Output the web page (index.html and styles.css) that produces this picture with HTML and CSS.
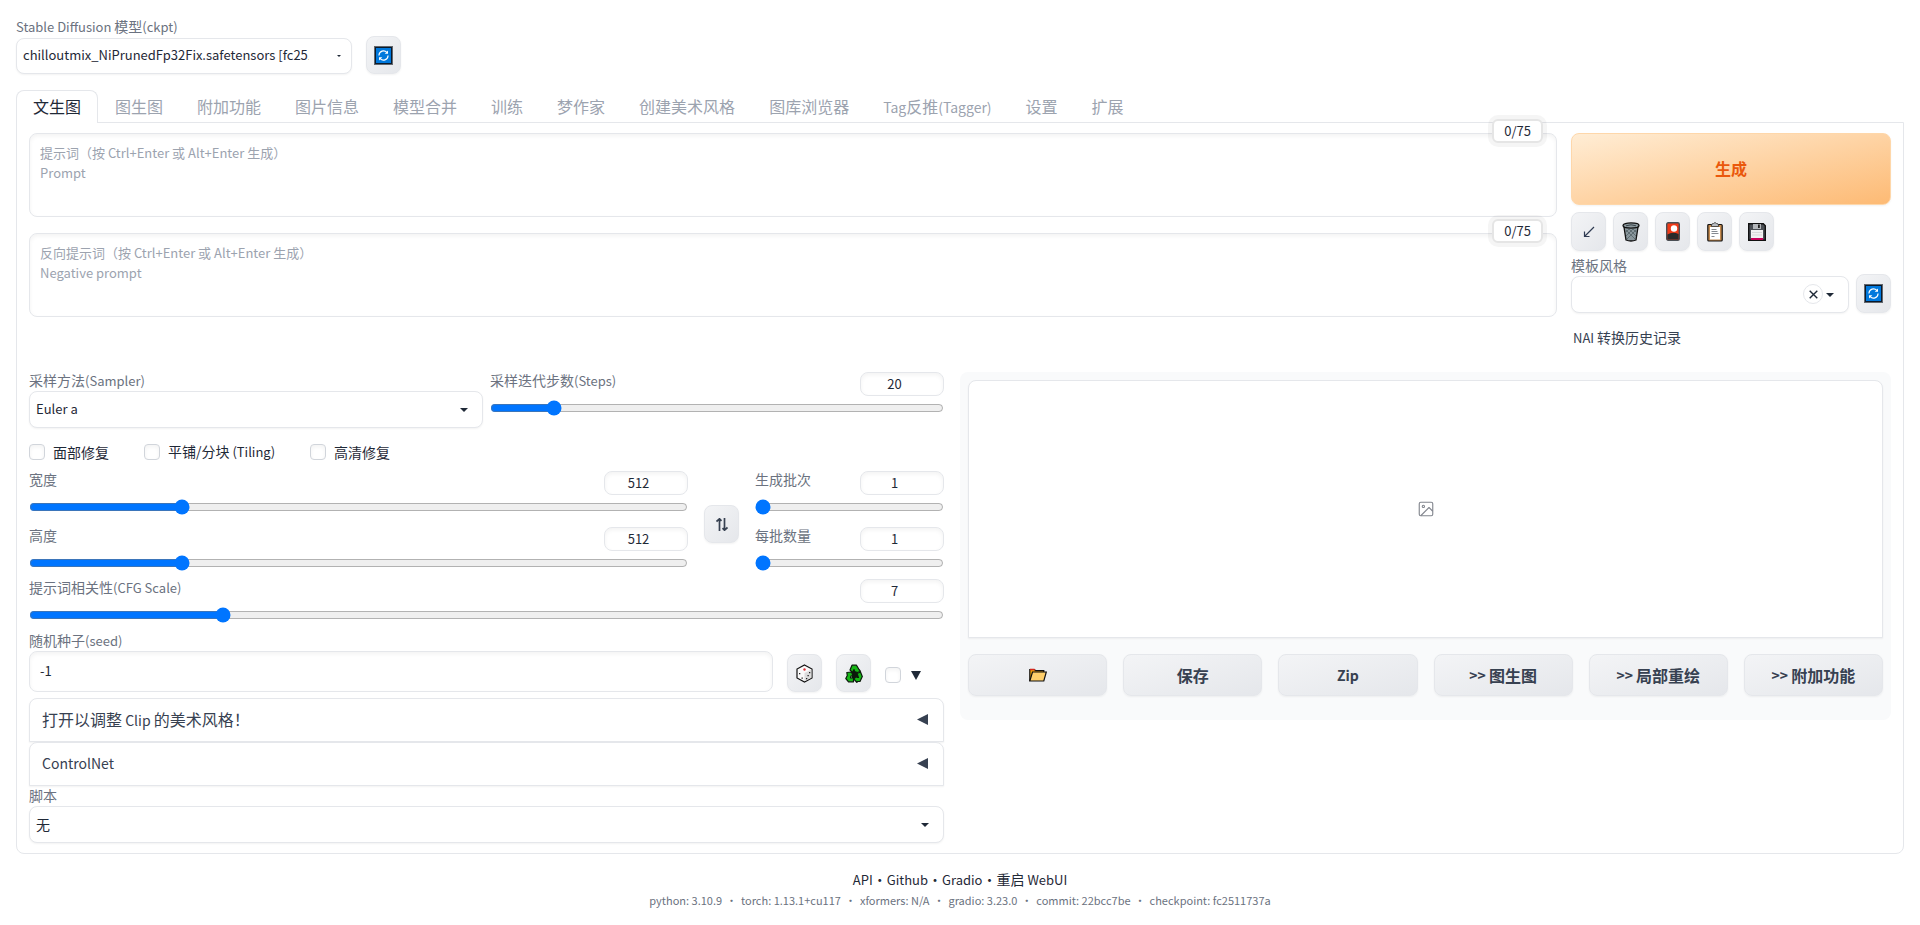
FILE: index.html
```html
<!DOCTYPE html>
<html lang="zh-CN">
<head>
<meta charset="utf-8">
<meta name="viewport" content="width=device-width, initial-scale=1">
<title>Stable Diffusion</title>
<link rel="stylesheet" href="styles.css">
</head>
<body>
<svg class="defs" width="0" height="0" aria-hidden="true">
  <symbol id="refresh" viewBox="0 0 19 19">
    <rect x="0" y="0" width="19" height="19" fill="#63676d"/>
    <rect x="1" y="1" width="17" height="17" fill="#0b1a2b"/>
    <rect x="2" y="2" width="15" height="15" fill="#0078dc"/>
    <path d="M5 9.500V9A4.500 4.500 0 0 1 12.800 6.300M14 9.500V10A4.500 4.500 0 0 1 6.200 12.700" fill="none" stroke="#fff" stroke-width="1.200"/>
    <path d="M14 4.500v3.300h-3.300zM5 14.500v-3.300h3.300z" fill="#fff"/>
  </symbol>
  <symbol id="caret" viewBox="0 0 8 4"><path d="M0 0h8L4 4z" fill="#1f2937"/></symbol>
  <symbol id="left" viewBox="0 0 11 11"><path d="M11 0v11L0 5.500z" fill="#374151"/></symbol>
</svg>

<header class="topbar">
  <div class="field model">
    <label for="ckpt"><span class="en">Stable Diffusion </span>模型<span class="en">(ckpt)</span></label>
    <div class="select">
      <select id="ckpt" class="en"><option>chilloutmix_NiPrunedFp32Fix.safetensors [fc2511737a]</option></select>
      <svg class="caret caret-small"><use href="#caret"/></svg>
    </div>
  </div>
  <button class="tool" aria-label="刷新模型"><svg width="19" height="19"><use href="#refresh"/></svg></button>
</header>

<nav class="tabs">
  <button class="tab active">文生图</button>
  <button class="tab">图生图</button>
  <button class="tab">附加功能</button>
  <button class="tab">图片信息</button>
  <button class="tab">模型合并</button>
  <button class="tab">训练</button>
  <button class="tab">梦作家</button>
  <button class="tab">创建美术风格</button>
  <button class="tab">图库浏览器</button>
  <button class="tab"><span class="en-large">Tag</span>反推<span class="en-large">(Tagger)</span></button>
  <button class="tab">设置</button>
  <button class="tab">扩展</button>
</nav>

<main class="panel">
  <section class="prompt-row">
    <div class="prompts">
      <div class="prompt">
        <textarea aria-label="提示词" placeholder="提示词（按 Ctrl+Enter 或 Alt+Enter 生成）&#10;Prompt"></textarea>
        <span class="counter">0/75</span>
      </div>
      <div class="prompt">
        <textarea aria-label="反向提示词" placeholder="反向提示词（按 Ctrl+Enter 或 Alt+Enter 生成）&#10;Negative prompt"></textarea>
        <span class="counter">0/75</span>
      </div>
    </div>
    <div class="actions">
      <button class="generate">生成</button>
      <div class="tools">
        <button class="tool tall" aria-label="读取参数">
          <svg width="12" height="12" viewBox="0 0 12 12"><path d="M11 1L2 10M1.500 5.500V10.500H6.500" fill="none" stroke="#2f3b52" stroke-width="1.200"/></svg>
        </button>
        <button class="tool tall" aria-label="清空提示词">
          <svg width="18" height="20" viewBox="0 0 18 20">
            <path d="M2 5h14l-2 13q-5 2-10 0z" fill="#8a979d" stroke="#111" stroke-width="1.300"/>
            <path d="M4 8l9 9M7 7l7 7M11 7l3 3M14 8l-9 9M11 7l-7 7M7 7l-3 3" stroke="#4c5a60" stroke-width=".7"/>
            <ellipse cx="9" cy="3.500" rx="8" ry="2.600" fill="#8d999e" stroke="#111" stroke-width="1.300"/>
            <path d="M4 3.800q5-2 10 0" stroke="#39454a" fill="none"/>
          </svg>
        </button>
        <button class="tool tall" aria-label="额外网络">
          <svg width="14" height="19" viewBox="0 0 14 19">
            <rect x=".7" y=".7" width="12.600" height="17.600" rx="1.500" fill="#f03a17" stroke="#4b4f55" stroke-width="1.400"/>
            <path d="M1.400 12.500q5-3 11.200-.5v5.600H1.400z" fill="#2b2b2b"/><circle cx="8" cy="6.500" r="3.200" fill="#fff"/>
          </svg>
        </button>
        <button class="tool tall" aria-label="应用风格">
          <svg width="16" height="20" viewBox="0 0 16 20">
            <rect x=".8" y="2.500" width="14.400" height="16.500" rx="1" fill="#c58b4f" stroke="#111" stroke-width="1.200"/>
            <rect x="3" y="5" width="10" height="12.500" fill="#fff"/>
            <path d="M4.500 3q0-1.500 2-1.500Q8-.5 9.500 1.500q2 0 2 1.500v1.500h-7z" fill="#b9bcc0" stroke="#333" stroke-width=".8"/>
            <path d="M4.500 7.500h5M4.500 9.500h6M4.500 11.500h7M4.500 14.500h3" stroke="#858a91" stroke-width="1"/>
          </svg>
        </button>
        <button class="tool tall" aria-label="保存风格">
          <svg width="18" height="18" viewBox="0 0 18 18">
            <path d="M.7.7h14.600l2 2v14.600H.7z" fill="#4b4f55" stroke="#111" stroke-width="1.400"/>
            <rect x="5" y="1" width="8" height="5" fill="#b3b6ba"/><rect x="10" y="1.500" width="1.800" height="3.500" fill="#222"/>
            <rect x="3" y="7" width="12" height="8" fill="#f2f2f2"/><path d="M4 9.500h10M4 12h10" stroke="#d9d9d9"/><rect x="3" y="15" width="12" height="2" fill="#c8005a"/>
          </svg>
        </button>
      </div>
      <div class="style-row">
        <div class="field">
          <label for="styles">模板风格</label>
          <div class="select">
            <select id="styles"><option></option></select>
            <button class="clear" aria-label="清除"><svg width="9" height="9" viewBox="0 0 9 9"><path d="M.7.7l7.600 7.600M8.300.7L.7 8.300" stroke="#1f2937" stroke-width="1.400"/></svg></button>
            <svg class="caret"><use href="#caret"/></svg>
          </div>
        </div>
        <button class="tool tall" aria-label="刷新风格"><svg width="19" height="19"><use href="#refresh"/></svg></button>
      </div>
      <p class="history"><span class="en">NAI </span>转换历史记录</p>
    </div>
  </section>

  <section class="work">
    <div class="settings">
      <div class="sampler-row">
        <div class="field">
          <label for="sampler">采样方法<span class="en">(Sampler)</span></label>
          <div class="select">
            <select id="sampler" class="en"><option>Euler a</option></select>
            <svg class="caret"><use href="#caret"/></svg>
          </div>
        </div>
        <div class="slider">
          <div class="slider-head"><label for="steps">采样迭代步数<span class="en">(Steps)</span></label><input class="number" type="number" value="20" aria-label="步数"></div>
          <input id="steps" type="range" min="1" max="150" value="20">
        </div>
      </div>

      <div class="checks">
        <label class="check"><input type="checkbox"><span>面部修复</span></label>
        <label class="check"><input type="checkbox"><span>平铺/分块<span class="en"> (Tiling)</span></span></label>
        <label class="check"><input type="checkbox"><span>高清修复</span></label>
      </div>

      <div class="size-row">
        <div class="sliders">
          <div class="slider">
            <div class="slider-head"><label for="width">宽度</label><input class="number" type="number" value="512" aria-label="宽度值"></div>
            <input id="width" type="range" min="64" max="2048" step="8" value="512">
          </div>
          <div class="slider">
            <div class="slider-head"><label for="height">高度</label><input class="number" type="number" value="512" aria-label="高度值"></div>
            <input id="height" type="range" min="64" max="2048" step="8" value="512">
          </div>
        </div>
        <button class="tool swap" aria-label="交换宽高">
          <svg width="12" height="13" viewBox="0 0 12 13"><path d="M3.500 13V1.500M.5 3.500L3.500.8l2 2M8.500 0v11.500M6.500 10.200l2 2 3-2.700" fill="none" stroke="#374151" stroke-width="1.700"/></svg>
        </button>
        <div class="sliders batch">
          <div class="slider">
            <div class="slider-head"><label for="count">生成批次</label><input class="number" type="number" value="1" aria-label="批次值"></div>
            <input id="count" type="range" min="1" max="100" value="1">
          </div>
          <div class="slider">
            <div class="slider-head"><label for="batch">每批数量</label><input class="number" type="number" value="1" aria-label="数量值"></div>
            <input id="batch" type="range" min="1" max="8" value="1">
          </div>
        </div>
      </div>

      <div class="slider cfg">
        <div class="slider-head"><label for="cfg">提示词相关性<span class="en">(CFG Scale)</span></label><input class="number" type="number" value="7" aria-label="相关性值"></div>
        <input id="cfg" type="range" min="1" max="30" step="0.5" value="7">
      </div>

      <div class="seed-row">
        <div class="field">
          <label for="seed">随机种子<span class="en">(seed)</span></label>
          <input id="seed" class="seed" type="text" value="-1">
        </div>
        <button class="tool" aria-label="随机">
          <svg width="17" height="19" viewBox="0 0 17 19">
            <path d="M8.500 1L16 5v9l-7.500 4L1 14V5z" fill="#fafafa" stroke="#111" stroke-width="1.200"/>
            <path d="M8.500 9L15.400 5.400v8.300l-6.900 3.600z" fill="#dcdcdc"/>
            <circle cx="8.500" cy="5.500" r="1.200" fill="#e0343c"/>
            <path d="M3 9h1.300v1.300H3zM5.500 13.500h1.300v1.300H5.500zM13 8h1.300v1.300H13zM10 14h1.300v1.300H10zM11.500 11h1.300v1.300h-1.300z" fill="#222"/>
          </svg>
        </button>
        <button class="tool" aria-label="重用种子">
          <svg width="18" height="19" viewBox="0 0 18 19">
            <path d="M6 8l3-2 4 3-1 5H7z" fill="#0b1a0b"/>
            <g fill="#16b716" stroke="#0b1a0b" stroke-width="1.200" stroke-linejoin="round">
              <path d="M5 6L7 1.200h4.500L14 5.500l1.500 1.800-3 1.200-3-1L9 5.500 7.500 8.500z"/>
              <path d="M1.800 8.500L6.500 8 8 11.500l-2 .5-.5 2h3v3.800H3.500L.8 14.500l1.500-3z"/>
              <path d="M12 9.500L15.500 8 17.300 12.500 15 17.500H12v1L8.800 15 12 11.500v2h1.500z"/>
            </g>
          </svg>
        </button>
        <label class="extra"><input type="checkbox" aria-label="额外种子设置"><svg width="10" height="9" viewBox="0 0 10 9"><path d="M0 0h10L5 9z" fill="#1f2937"/></svg></label>
      </div>

      <div class="accordions">
        <button class="accordion"><span>打开以调整<span class="en-large"> Clip </span>的美术风格！</span><svg width="11" height="11"><use href="#left"/></svg></button>
        <button class="accordion"><span class="en-large">ControlNet</span><svg width="11" height="11"><use href="#left"/></svg></button>
      </div>

      <div class="field script">
        <label for="script">脚本</label>
        <div class="select">
          <select id="script"><option>无</option></select>
          <svg class="caret"><use href="#caret"/></svg>
        </div>
      </div>
    </div>

    <div class="output">
      <div class="gallery">
        <svg width="18" height="18" viewBox="0 0 24 24" fill="none" stroke="#82868e" stroke-width="1.500" stroke-linejoin="round"><rect x="3" y="3" width="18" height="18" rx="2"/><circle cx="8.500" cy="8.500" r="1.500"/><path d="M21 15l-5-5L5 21"/></svg>
      </div>
      <div class="output-buttons">
        <button aria-label="打开目录">
          <svg width="18" height="14" viewBox="0 0 18 14">
            <path d="M.8 13V1.500h4.500l1.500 1.200h8V5" fill="#f0a30c" stroke="#111" stroke-width="1.200"/>
            <path d="M1 .8h4.500l1 1.400H1z" fill="#d4281e"/>
            <path d="M.8 13L3.500 4h13.800l-2.500 9z" fill="#ffcf6b" stroke="#111" stroke-width="1.200"/>
          </svg>
        </button>
        <button>保存</button>
        <button><span class="en-large">Zip</span></button>
        <button><span class="en-large">&gt;&gt;&nbsp;</span>图生图</button>
        <button><span class="en-large">&gt;&gt;&nbsp;</span>局部重绘</button>
        <button><span class="en-large">&gt;&gt;&nbsp;</span>附加功能</button>
      </div>
    </div>
  </section>
</main>

<footer class="footer">
  <div class="links"><a class="en" href="#">API</a><span>・</span><a class="en" href="#">Github</a><span>・</span><a class="en" href="#">Gradio</a><span>・</span><a href="#">重启<span class="en"> WebUI</span></a></div>
  <div class="versions"><span>python: 3.10.9</span><span>•</span><span>torch: 1.13.1+cu117</span><span>•</span><span>xformers: N/A</span><span>•</span><span>gradio: 3.23.0</span><span>•</span><span>commit: 22bcc7be</span><span>•</span><span>checkpoint: fc2511737a</span></div>
</footer>
</body>
</html>
```

FILE: styles.css
```css
* { box-sizing: border-box; }

body {
  margin: 0;
  padding: 16px;
  background: #fff;
  color: #1f2937;
  font: 14px/20px "Noto Sans CJK SC", sans-serif;
}

button, input, select, textarea { font: inherit; color: inherit; margin: 0; }
button { cursor: pointer; padding: 0; }
svg { display: block; flex: none; }
.defs { position: absolute; }

/* Latin runs are set one step smaller than the Chinese text beside them */
.en { font-size: 13px; line-height: 1; }
.en-large { font-size: 14px; line-height: 1; }

.field { display: flex; flex-direction: column; flex: 1; min-width: 0; }
.field > label, .slider-head label { color: #6b7280; line-height: 17px; white-space: nowrap; }
.field > label { height: 19px; }

.select { position: relative; }
.select select {
  display: block;
  width: 100%;
  height: 37px;
  padding: 0 42px 2px 6px;
  appearance: none;
  background: #fff;
  border: 1px solid #e5e7eb;
  border-radius: 8px;
  box-shadow: 0 1px 2px rgba(0, 0, 0, .05);
  line-height: 20px;
  text-overflow: clip;
}
.caret { position: absolute; right: 15px; top: 17px; width: 8px; height: 4px; }
.caret-small { right: 11px; width: 4px; height: 2px; }

.tool {
  flex: none;
  display: flex;
  align-items: center;
  justify-content: center;
  width: 35px;
  height: 38px;
  border: 1px solid #e5e7eb;
  border-radius: 8px;
  background: linear-gradient(to bottom right, #f3f4f6, #e5e7eb);
  box-shadow: 0 1px 2px rgba(0, 0, 0, .05);
}
.tool.tall { height: 39px; }

.topbar { display: flex; align-items: flex-end; gap: 14px; }
.model { flex: 0 0 336px; padding-top: 2px; }
.model > label { height: 20px; }
.model .select select { height: 36px; }

.tabs { display: flex; margin-top: 16px; position: relative; }
.tab {
  height: 33px;
  margin-bottom: -1px;
  padding: 0 16px 2px;
  border: 1px solid transparent;
  border-bottom: 0;
  border-radius: 8px 8px 0 0;
  background: none;
  color: #9ca3af;
  font-size: 16px;
  white-space: nowrap;
}
.tab.active { background: #fff; border-color: #e5e7eb; color: #1f2937; }

.panel {
  padding: 10px 12px;
  border: 1px solid #e5e7eb;
  border-radius: 0 0 8px 8px;
}

.prompt-row { display: flex; gap: 14px; }
.prompts { flex: 1; display: flex; flex-direction: column; gap: 16px; }
.prompt { position: relative; }
.prompt textarea {
  display: block;
  width: 100%;
  height: 84px;
  padding: 9px 10px;
  border: 1px solid #e5e7eb;
  border-radius: 8px;
  box-shadow: inset 0 2px 4px rgba(0, 0, 0, .05);
  font-size: 13px;
  resize: none;
}
textarea::placeholder { color: #9ca3af; }
.counter {
  position: absolute;
  top: -14px;
  right: 14px;
  padding: 0 10px;
  border: 2px solid #e5e5e5;
  border-radius: 6px;
  background: #fff;
  box-shadow: 0 0 0 4px rgba(0, 0, 0, .04);
  font-size: 13px;
}

.actions { width: 320px; display: flex; flex-direction: column; }
.generate {
  height: 72px;
  padding-bottom: 2px;
  border: 1px solid #fed7aa;
  border-radius: 8px;
  background: linear-gradient(to bottom right, #ffedd5, #fdba74);
  box-shadow: 0 1px 2px rgba(0, 0, 0, .05);
  color: #ea580c;
  font-size: 16px;
  font-weight: 600;
}
.tools { display: flex; gap: 7px; margin-top: 7px; }
.style-row { display: flex; align-items: flex-end; gap: 7px; margin-top: 6px; }
.clear {
  position: absolute;
  top: 8px;
  right: 26px;
  width: 20px;
  height: 20px;
  display: flex;
  align-items: center;
  justify-content: center;
  border: 1px solid #e5e7eb;
  border-radius: 50%;
  background: #fff;
}
.history { margin: 14px 2px 0; color: #374151; }

.work {
  display: grid;
  grid-template-columns: minmax(0, 915fr) minmax(0, 931fr);
  gap: 16px;
  align-items: start;
  margin-top: 25px;
}

.sampler-row { display: flex; gap: 7px; }
.sampler-row > * { flex: 1; min-width: 0; }
.slider-head { display: flex; justify-content: space-between; height: 24px; }
.number {
  width: 84px;
  height: 24px;
  padding: 0 22px 1px 7px;
  border: 1px solid #e5e7eb;
  border-radius: 8px;
  background: #fff;
  box-shadow: inset 0 2px 4px rgba(0, 0, 0, .05);
  font-size: 13px;
  text-align: center;
  appearance: textfield;
}
.number::-webkit-inner-spin-button { display: none; }
input[type="range"] { display: block; width: 100%; height: 16px; margin-top: 4px; }

input[type="checkbox"] {
  appearance: none;
  flex: none;
  width: 16px;
  height: 16px;
  border: 1px solid #d1d5db;
  border-radius: 4px;
  background: #fff;
  box-shadow: inset 0 2px 4px rgba(0, 0, 0, .05);
}
.checks { display: flex; gap: 35px; margin-top: 14px; }
.check { display: flex; align-items: center; gap: 8px; line-height: 20px; }
.check span { line-height: 18px; }

.size-row { display: flex; align-items: center; gap: 16px; margin-top: 10px; }
.sliders { flex: 1; display: flex; flex-direction: column; gap: 12px; }
.sliders.batch { flex: 0 0 189px; }
.swap { margin-top: 6px; }
.cfg { margin-top: 8px; }

.seed-row { display: flex; align-items: flex-end; gap: 14px; margin-top: 9px; }
.seed {
  height: 41px;
  padding: 0 10px 2px;
  border: 1px solid #e5e7eb;
  border-radius: 8px;
  box-shadow: inset 0 2px 4px rgba(0, 0, 0, .05);
  font-size: 13px;
}
.extra { display: flex; align-items: center; gap: 10px; width: 59px; height: 34px; }

.accordions { margin-top: 6px; }
.accordion {
  display: flex;
  align-items: center;
  justify-content: space-between;
  width: 100%;
  height: 44px;
  padding: 0 15px 2px 12px;
  border: 1px solid #e5e7eb;
  border-radius: 8px 8px 0 0;
  background: #fff;
  box-shadow: 0 1px 2px rgba(0, 0, 0, .05);
  color: #374151;
  font-size: 16px;
}
.script { margin-top: 1px; }

.output { padding: 8px 8px 24px; border-radius: 8px; background: #f9fafb; }
.gallery {
  display: flex;
  align-items: center;
  justify-content: center;
  height: 258px;
  border: 1px solid #e5e7eb;
  border-radius: 8px 8px 0 0;
  background: #fff;
  box-shadow: 0 1px 2px rgba(0, 0, 0, .05);
}
.output-buttons { display: grid; grid-template-columns: repeat(6, 1fr); gap: 16px; margin-top: 16px; }
.output-buttons button {
  display: flex;
  align-items: center;
  justify-content: center;
  height: 42px;
  border: 1px solid #e5e7eb;
  border-radius: 8px;
  background: linear-gradient(to bottom right, #f3f4f6, #e5e7eb);
  box-shadow: 0 1px 2px rgba(0, 0, 0, .05);
  color: #374151;
  font-size: 16px;
  font-weight: 600;
  white-space: nowrap;
}

.footer { margin-top: 15px; text-align: center; }
.links a { color: inherit; text-decoration: none; }
.versions { display: flex; justify-content: center; gap: 4px; margin-top: 1px; color: #6b7280; font-size: 11px; }
```
